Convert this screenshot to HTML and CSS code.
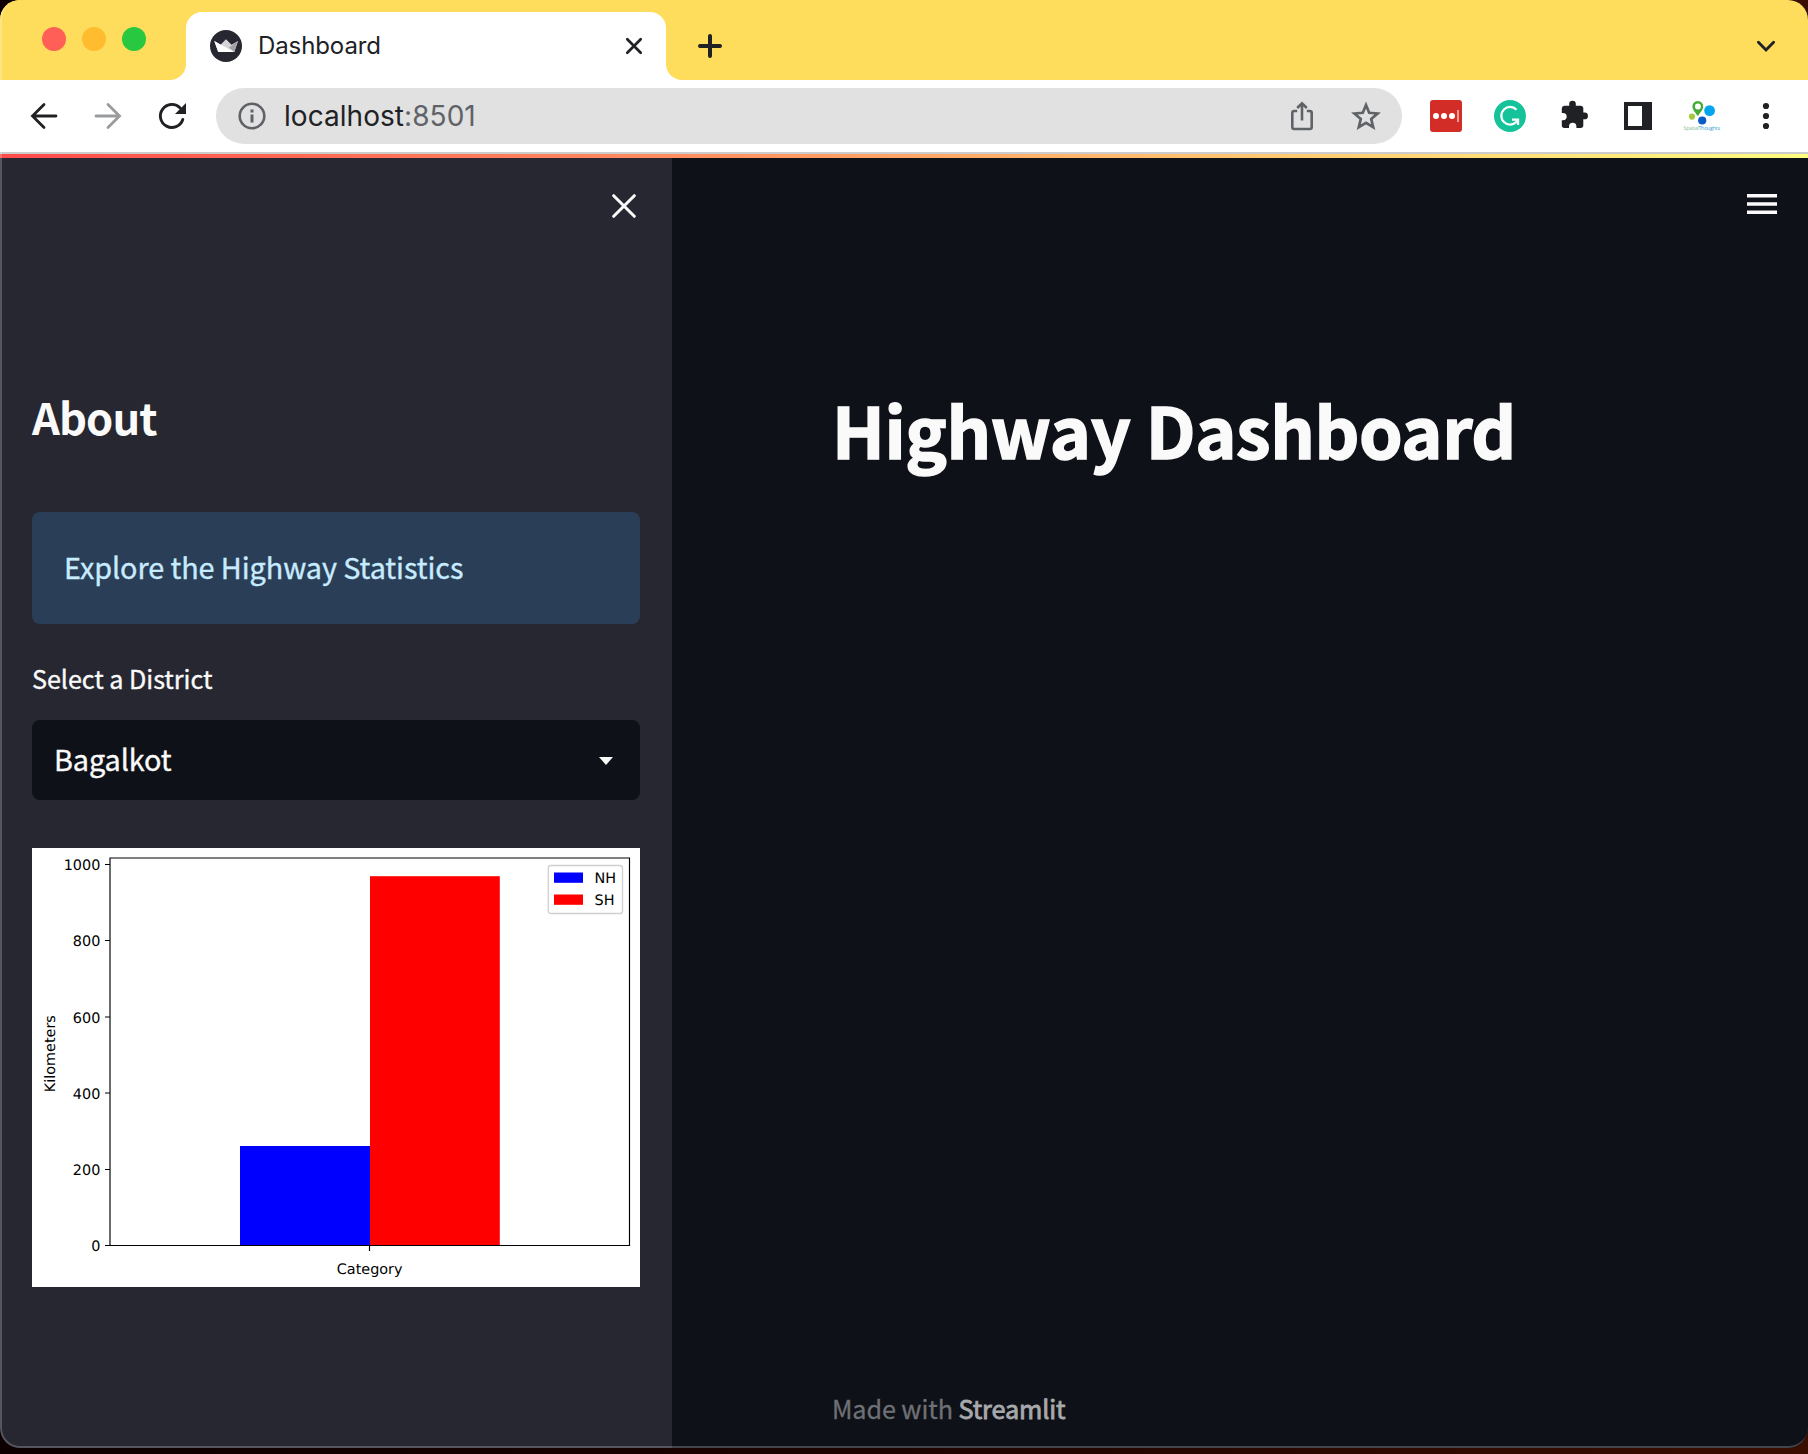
FILE: index.html
```html
<!DOCTYPE html>
<html lang="en">
<head>
<meta charset="utf-8">
<title>Dashboard</title>
<link rel="stylesheet" href="styles.css">
</head>
<body>
<div class="window">
  <header class="tabstrip">
    <div class="lights"><i class="light red"></i><i class="light amber"></i><i class="light green"></i></div>
    <div class="tab">
      <svg width="32" height="32" viewBox="0 0 32 32"><circle cx="16" cy="16" r="16" fill="#262730"/><path d="M4.3 11 10.5 14.8 16 9.2 21.5 14.8 28 11 24.3 22H8.2Z" fill="#d4d4d6"/><path d="M4.3 11 24.3 22H8.2Z" fill="#fff"/><path d="M28 11 24.3 22 19 17.5Z" fill="#a3a3a6"/></svg>
      <span class="tab-title">Dashboard</span>
      <svg width="20" height="20" viewBox="0 0 20 20"><path d="M3.3 3.3 16.7 16.7M16.7 3.3 3.3 16.7" stroke="#202124" stroke-width="2.7" stroke-linecap="round"/></svg>
    </div>
    <div class="new-tab"><svg width="28" height="28" viewBox="0 0 28 28"><path d="M14 4v20M4 14h20" stroke="#202124" stroke-width="4" stroke-linecap="round"/></svg></div>
    <svg class="tab-menu" width="24" height="24" viewBox="0 0 24 24"><path d="M4.4 8.3 12 16l7.6-7.7" fill="none" stroke="#202124" stroke-width="2.9" stroke-linecap="round"/></svg>
  </header>
  <nav class="toolbar">
    <span class="tool"><svg width="32" height="32" viewBox="0 0 32 32"><path d="M28 16H4.5M16 4.5 4.5 16 16 27.5" fill="none" stroke="#202124" stroke-width="2.8" stroke-linecap="round"/></svg></span>
    <span class="tool"><svg width="32" height="32" viewBox="0 0 32 32"><path d="M4 16h23.5M16 4.5 27.5 16 16 27.5" fill="none" stroke="#9a9b9d" stroke-width="2.8" stroke-linecap="round"/></svg></span>
    <span class="tool"><svg width="32" height="32" viewBox="0 0 32 32"><path d="M26.8 19.5A11.5 11.5 0 1 1 24.2 8" fill="none" stroke="#202124" stroke-width="2.9" stroke-linecap="round"/><path d="M30 3v11H19Z" fill="#202124"/></svg></span>
    <div class="omnibox">
      <svg width="28" height="28" viewBox="0 0 28 28"><circle cx="14" cy="14" r="12.3" fill="none" stroke="#5f6368" stroke-width="2.6"/><path d="M12.5 12.5h3v8h-3zM12.5 7.5h3v3h-3z" fill="#5f6368"/></svg>
      <span class="url">localhost<span class="port">:8501</span></span>
      <span class="tool"><svg width="32" height="32" viewBox="0 0 32 32"><path d="M11.2 11H8.2Q6.300 11 6.300 13V27Q6.300 29 8.2 29H23.800Q25.700 29 25.700 27V13Q25.700 11 23.800 11H20.800M16 20.500V4M11.200 8 16 3.300 20.800 8" fill="none" stroke="#5f6368" stroke-width="2.600"/></svg></span>
      <span class="tool"><svg width="32" height="32" viewBox="0 0 32 32"><path d="M16 5 19.200 12.800 27.600 13.500 21.200 19 23.200 27.200 16 22.800 8.800 27.200 10.800 19 4.400 13.500 12.800 12.800Z" fill="none" stroke="#5f6368" stroke-width="2.700"/></svg></span>
    </div>
    <div class="extensions">
      <span class="tool"><svg width="32" height="32" viewBox="0 0 32 32"><rect width="32" height="32" rx="3" fill="#d32d27"/><circle cx="6" cy="16" r="3" fill="#fff"/><circle cx="14" cy="16" r="3" fill="#fff"/><circle cx="22" cy="16" r="3" fill="#fff"/><path d="M28 10v12" stroke="#f09a96" stroke-width="2"/></svg></span>
      <span class="tool"><svg width="32" height="32" viewBox="0 0 32 32"><circle cx="16" cy="16" r="16" fill="#15c39a"/><path d="M22.500 9.700A8.800 8.800 0 1 0 22.500 21.800L24 19.600M18 19.600H24V25" fill="none" stroke="#fff" stroke-width="2.300"/></svg></span>
      <span class="tool"><svg width="32" height="32" viewBox="0 0 32 32"><path d="M26.300 12.600h-1V8.300a2.700 2.700 0 0 0-2.700-2.600h-4.800V4.100a3.300 3.300 0 0 0-6.600 0v1.600H6.400a2.700 2.700 0 0 0-2.600 2.600v4.600h1.200a3.700 3.700 0 0 1 0 7.400H3.800v5a2.700 2.700 0 0 0 2.600 2.700h4.600v-1.500a3.700 3.700 0 0 1 7.400 0V28h4.200a2.700 2.700 0 0 0 2.700-2.700v-6h1.300a3.300 3.300 0 0 0 0-6.700Z" fill="#202124"/></svg></span>
      <span class="tool"><svg width="28" height="28" viewBox="0 0 28 28"><path fill-rule="evenodd" d="M0 0H28V28H0ZM4 4V24H18V4Z" fill="#202124"/></svg></span>
      <span class="tool"><svg width="40" height="40" viewBox="2 0 40 40"><path d="M17.800 20C15 16 12.400 13.500 12.400 10.400a5.400 5.400 0 0 1 10.800 0C23.200 13.500 20.600 16 17.800 20Z" fill="#43ac35"/><circle cx="17.900" cy="10.500" r="3" fill="#fff"/><circle cx="29.600" cy="14.600" r="5.400" fill="#03a5ef"/><circle cx="12" cy="20.600" r="3.100" fill="#a5c93c"/><circle cx="22.200" cy="24.500" r="4.100" fill="#0b5cc4"/><text x="3.500" y="34" font-size="5.400" textLength="36.500" font-family="Open Sans, sans-serif"><tspan fill="#8fc79a">Spatial</tspan><tspan fill="#3aa3cf">Thoughts</tspan></text></svg></span>
      <span class="tool"><svg width="8" height="28" viewBox="0 0 8 28"><g fill="#202124"><circle cx="4" cy="4" r="3.100"/><circle cx="4" cy="14" r="3.100"/><circle cx="4" cy="24" r="3.100"/></g></svg></span>
    </div>
  </nav>
  <div class="decoration"></div>
  <div class="app">
    <aside class="sidebar">
      <div class="sidebar-top"><svg width="24" height="24" viewBox="0 0 24 24"><path d="M1.700 1.700 22.300 22.300M22.300 1.700 1.700 22.300" stroke="#fafafa" stroke-width="3" stroke-linecap="round"/></svg></div>
      <h2 class="about">About</h2>
      <div class="notice">Explore the Highway Statistics</div>
      <div class="label">Select a District</div>
      <div class="select"><span>Bagalkot</span><svg width="14" height="8" viewBox="0 0 14 8"><path d="M0 0H14L7 8Z" fill="#fafafa"/></svg></div>
      <svg class="chart" width="608" height="439" viewBox="0 0 608 439">
        <rect width="608" height="439" fill="#fff"/>
        <rect x="208" y="298" width="130" height="99.500" fill="#00f"/>
        <rect x="338" y="28.200" width="129.800" height="369.300" fill="#f00"/>
        <path d="M78 10H597.500V397.500H78ZM73 16.500h5M73 92.500h5M73 169h5M73 245h5M73 321.500h5M73 397.500h5M337.500 397.500v5.500" fill="none" stroke="#000" stroke-width="1.150"/>
        <g text-anchor="end">
          <text x="68.300" y="21.800">1000</text><text x="68.300" y="98.100">800</text><text x="68.300" y="174.500">600</text><text x="68.300" y="250.600">400</text><text x="68.300" y="327">200</text><text x="68.300" y="403.200">0</text>
        </g>
        <text x="337.700" y="425.500" text-anchor="middle">Category</text>
        <text transform="translate(22.700 205.700) rotate(-90)" text-anchor="middle">Kilometers</text>
        <rect x="516.300" y="17.500" width="74.200" height="48" rx="2.500" fill="#fff" stroke="#d0d0d0" stroke-width="1.300"/>
        <rect x="522" y="24.500" width="29" height="10.300" fill="#00f"/>
        <rect x="522" y="46.500" width="29" height="10.300" fill="#f00"/>
        <text x="562.600" y="35.200">NH</text><text x="562.600" y="57">SH</text>
      </svg>
    </aside>
    <main class="main">
      <div class="main-top"><svg width="30" height="20" viewBox="0 0 30 20"><path d="M0 0h30v3.500H0zM0 8.300h30v3.500H0zM0 16.500h30v3.500H0z" fill="#fafafa"/></svg></div>
      <h1 class="title">Highway Dashboard</h1>
      <footer class="footer">Made with <span class="brand">Streamlit</span></footer>
    </main>
  </div>
</div>
</body>
</html>
```
FILE: styles.css
```css
* { box-sizing: border-box; }
body {
  margin: 0;
  height: 1454px;
  overflow: hidden;
  background: linear-gradient(90deg, #0c0000, #1d0300 50%, #3a0d00);
  font-family: "Noto Sans CJK JP", sans-serif;
  color: #fafafa;
}
svg { display: block; flex: none; }
.window {
  position: relative;
  display: flex;
  flex-direction: column;
  height: 1448px;
  border-radius: 20px;
  overflow: hidden;
  background: #0e1117;
}
/* thin light edge that follows the rounded window frame */
.window::after {
  content: "";
  position: absolute;
  inset: 0;
  border: 2px solid rgba(255, 255, 255, .22);
  border-top: 0;
  border-right-width: 0;
  border-radius: 20px;
}

/* the white patch shows through the curved feet of the active tab */
.tabstrip { display: flex; flex: none; height: 80px; background: linear-gradient(#fff, #fff) 160px 100% / 540px 20px no-repeat, #ffdd5c; }
.lights { display: flex; gap: 16px; width: 186px; height: 80px; padding: 27px 0 0 42px; background: #ffdd5c; border-bottom-right-radius: 16px; }
.light { width: 24px; height: 24px; border-radius: 50%; }
.red { background: #ff5f57; }
.amber { background: #febc2e; }
.green { background: #28c840; }
.tab { display: flex; align-items: center; width: 480px; height: 68px; margin-top: 12px; padding: 0 22px 0 24px; background: #fff; border-radius: 16px 16px 0 0; }
.tab-title { flex: 1; margin-left: 16px; font: 24px/32px Inter, sans-serif; letter-spacing: -.1px; color: #202124; }
.new-tab { height: 80px; padding: 32px 30px 0; background: #ffdd5c; border-bottom-left-radius: 16px; }
.tab-menu { align-self: center; margin: 12px 30px 0 auto; }

.toolbar { display: flex; flex: none; align-items: center; height: 74px; padding-left: 12px; background: #fff; border-bottom: 2px solid #ccc; }
.tool { display: flex; flex: none; align-items: center; justify-content: center; width: 64px; height: 56px; }
.omnibox { display: flex; align-items: center; width: 1186px; height: 56px; margin: 0 12px; padding: 0 4px 0 22px; border-radius: 28px; background: #e1e1e1; }
.url { flex: 1; margin-left: 18px; font: 28px/40px Inter, sans-serif; letter-spacing: .05px; color: #202124; }
.port { color: #5f6368; }
.extensions { display: flex; }
.decoration { flex: none; height: 4px; background: linear-gradient(90deg, #ff4b4b, #fffd80); }

.app { display: flex; flex: 1; min-height: 0; }
.sidebar { width: 672px; padding: 0 32px; background: #262730; -webkit-text-stroke: .35px; }
.sidebar-top { display: flex; justify-content: flex-end; height: 229px; padding: 36px 4px 0 0; }
.about { margin: 0; height: 125px; font-size: 43.500px; line-height: 60px; font-weight: 700; letter-spacing: -.9px; -webkit-text-stroke: 0; }
.notice { height: 112px; padding-left: 32px; border-radius: 8px; background: #2b3e57; color: #c7ebff; font-size: 28.800px; line-height: 110px; letter-spacing: -.08px; }
.label { height: 96px; padding-top: 36px; font-size: 25.200px; line-height: 36px; letter-spacing: -.06px; }
.select { display: flex; align-items: center; justify-content: space-between; height: 80px; padding: 0 27px 3px 22px; border-radius: 8px; background: #0e1117; font-size: 28.800px; line-height: 40px; letter-spacing: -.1px; }
.select svg { margin-top: 5px; }
.chart { margin-top: 48px; font: 14.400px "DejaVu Sans", sans-serif; text-rendering: geometricPrecision; -webkit-text-stroke: 0; }

.main { display: flex; flex: 1; flex-direction: column; padding-left: 160px; }
.main-top { display: flex; justify-content: flex-end; height: 221px; padding: 36px 31px 0 0; }
.title { margin: 0; font-size: 69.800px; line-height: 100px; font-weight: 700; letter-spacing: -.4px; white-space: nowrap; -webkit-text-stroke: 1.500px; }
.footer { margin-top: auto; height: 58px; font-size: 25.200px; line-height: 36px; letter-spacing: -.1px; color: #6e7075; -webkit-text-stroke: .3px; }
.brand { color: #a8a9ab; letter-spacing: -.1px; -webkit-text-stroke: .8px; }
```
